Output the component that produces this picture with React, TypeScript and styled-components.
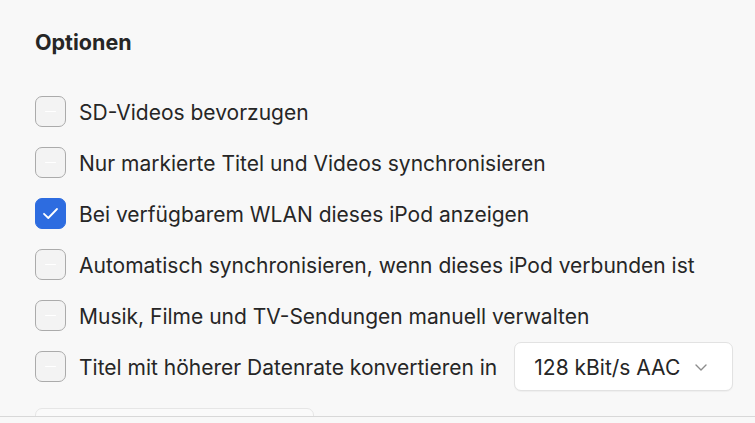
import React from "react";
import styled, { createGlobalStyle } from "styled-components";

const GlobalStyle = createGlobalStyle`
  html, body {
    margin: 0;
    padding: 0;
    background: #f8f8f8;
  }
  body {
    font-family: Inter, "Noto Sans", "Liberation Sans", sans-serif;
    color: #262626;
    -webkit-font-smoothing: antialiased;
  }
`;

type Option = {
  label: string;
  checked?: boolean;
  select?: string;
};

const options: Option[] = [
  { label: "SD-Videos bevorzugen" },
  { label: "Nur markierte Titel und Videos synchronisieren" },
  { label: "Bei verfügbarem WLAN dieses iPod anzeigen", checked: true },
  { label: "Automatisch synchronisieren, wenn dieses iPod verbunden ist" },
  { label: "Musik, Filme und TV-Sendungen manuell verwalten" },
  { label: "Titel mit höherer Datenrate konvertieren in", select: "128 kBit/s AAC" },
];

function Checkbox(props: { checked?: boolean }) {
  return (
    <Box $checked={props.checked}>
      {props.checked ? (
        <svg width="17" height="13" viewBox="0 0 17 13">
          <path
            d="M2 6.8 L6.3 11 L15 2"
            fill="none"
            stroke="#fff"
            strokeWidth="1.8"
            strokeLinecap="round"
            strokeLinejoin="round"
          />
        </svg>
      ) : (
        <Dash />
      )}
    </Box>
  );
}

function App() {
  return (
    <Page>
      <GlobalStyle />
      <Content>
        <Title>Optionen</Title>
        <List>
          {options.map((o) => (
            <Row key={o.label}>
              <Checkbox checked={o.checked} />
              <Label>{o.label}</Label>
              {o.select && (
                <Select>
                  <span>{o.select}</span>
                  <svg width="12" height="7" viewBox="0 0 12 7">
                    <path
                      d="M1 1 L6 6 L11 1"
                      fill="none"
                      stroke="#8c8c8c"
                      strokeWidth="1.4"
                      strokeLinecap="round"
                      strokeLinejoin="round"
                    />
                  </svg>
                </Select>
              )}
            </Row>
          ))}
        </List>
        <NextField />
      </Content>
      <Footer />
    </Page>
  );
}

const Page = styled.div`
  height: 423px;
  display: flex;
  flex-direction: column;
  overflow: hidden;
`;

const Content = styled.div`
  flex: 1;
  overflow: hidden;
  padding: 28px 0 0 35px;
`;

const Title = styled.div`
  font-size: 21.5px;
  font-weight: 700;
  line-height: 28px;
  color: #262626;
`;

const List = styled.div`
  display: flex;
  flex-direction: column;
  margin-top: 30px;
`;

const Row = styled.div`
  display: flex;
  align-items: center;
  height: 51px;
`;

const Box = styled.div<{ $checked?: boolean }>`
  width: 31px;
  height: 31px;
  box-sizing: border-box;
  border-radius: 7px;
  flex-shrink: 0;
  display: flex;
  align-items: center;
  justify-content: center;
  background: ${(p) => (p.$checked ? "#2d6ce0" : "#f3f3f3")};
  border: 1px solid ${(p) => (p.$checked ? "#2d6ce0" : "#ababab")};
`;

const Dash = styled.div`
  width: 11px;
  height: 1.5px;
  background: #ffffff;
  border-radius: 1px;
`;

const Label = styled.span`
  margin-left: 13px;
  font-size: 21px;
  white-space: nowrap;
  padding-top: 2px;
`;

const Select = styled.div`
  margin-left: 17px;
  width: 219px;
  height: 49px;
  box-sizing: border-box;
  display: flex;
  align-items: center;
  justify-content: space-between;
  padding: 2px 25px 0 19px;
  background: #ffffff;
  border: 1px solid #e2e2e2;
  border-radius: 7px;
  box-shadow: 0 1px 1px rgba(0, 0, 0, 0.04);
  font-size: 21px;
  color: #262626;
`;

const NextField = styled.div`
  margin-top: 16px;
  width: 279px;
  height: 40px;
  box-sizing: border-box;
  background: #fafafa;
  border: 1px solid #e6e6e6;
  border-radius: 7px;
`;

const Footer = styled.div`
  height: 6px;
  flex-shrink: 0;
  border-top: 1px solid #d8d8d8;
  background: #f8f8f8;
`;

export default App;
